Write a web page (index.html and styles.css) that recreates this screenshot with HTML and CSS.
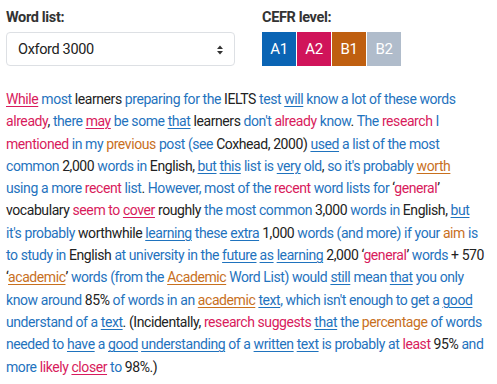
FILE: index.html
```html
<!DOCTYPE html>
<html lang="en">
<head>
    <meta charset="UTF-8">
    <meta name="viewport" content="width=device-width, initial-scale=1.0">
    <title>Word list checker</title>
    <link rel="stylesheet" href="styles.css">
</head>
<body>
    <div class="controls">
        <div class="control word-list">
            <label class="label">Word list:</label>
            <div class="select">
                <span>Oxford 3000</span>
                <svg class="arrows" width="8" height="12" viewBox="0 0 8 12">
                    <path d="M4 1.5 L7 5 H1 Z" fill="#333"/>
                    <path d="M4 10.5 L7 7 H1 Z" fill="#333"/>
                </svg>
            </div>
        </div>
        <div class="control">
            <label class="label">CEFR level:</label>
            <div class="levels">
                <span class="level a1">A1</span>
                <span class="level a2">A2</span>
                <span class="level b1">B1</span>
                <span class="level b2">B2</span>
            </div>
        </div>
    </div>

    <p class="text">
        <span class="r u">While</span> <span class="b">most</span> learners <span class="b">preparing for the</span> IELTS <span class="b">test</span> <span class="b u">will</span> <span class="b">know a lot of these words</span><br>
        <span class="r">already</span>, <span class="b">there</span> <span class="r u">may</span> <span class="b">be some</span> <span class="b u">that</span> learners <span class="b">don't</span> <span class="r">already</span> <span class="b">know</span>. <span class="b">The</span> <span class="r">research</span> <span class="b">I</span><br>
        <span class="r">mentioned</span> <span class="b">in my</span> <span class="o">previous</span> <span class="b">post</span> <span class="b">(see</span> Coxhead, 2000) <span class="b u">used</span> <span class="b">a list of the most</span><br>
        <span class="b">common</span> 2,000 <span class="b">words in</span> English, <span class="b u">but</span> <span class="b u">this</span> <span class="b">list is</span> <span class="b u">very</span> <span class="b">old</span>, <span class="b">so it's probably</span> <span class="o u">worth</span><br>
        <span class="b">using a more</span> <span class="r">recent</span> <span class="b">list</span>. <span class="b">However, most of the</span> <span class="r">recent</span> <span class="b">word lists for</span> ‘<span class="r">general</span>’<br>
        vocabulary <span class="r">seem to</span> <span class="r u">cover</span> roughly <span class="b">the most common</span> 3,000 <span class="b">words in</span> English, <span class="b u">but</span><br>
        <span class="b">it's probably</span> worthwhile <span class="b u">learning</span> <span class="b">these</span> <span class="b u">extra</span> 1,000 <span class="b">words (and more) if your</span> <span class="o">aim</span> <span class="b">is</span><br>
        <span class="b">to study in</span> English <span class="b">at university in the</span> <span class="b u">future</span> <span class="b u">as</span> <span class="b u">learning</span> 2,000 ‘<span class="r">general</span>’ <span class="b">words</span> + 570<br>
        ‘<span class="o u">academic</span>’ <span class="b">words (from the</span> <span class="o u">Academic</span> <span class="b">Word List) would</span> <span class="b u">still</span> <span class="b">mean</span> <span class="b u">that</span> <span class="b">you only</span><br>
        <span class="b">know around</span> 85% <span class="b">of words in an</span> <span class="o u">academic</span> <span class="b u">text</span><span class="b">, which isn't enough to get a</span> <span class="b u">good</span><br>
        <span class="b">understand of a</span> <span class="b u">text</span>. (Incidentally, <span class="r">research suggests</span> <span class="b u">that</span> <span class="b">the</span> <span class="o">percentage</span> <span class="b">of words</span><br>
        <span class="b">needed to</span> <span class="b u">have</span> <span class="b">a</span> <span class="b u">good</span> <span class="b u">understanding</span> <span class="b">of a</span> <span class="b u">written</span> <span class="b u">text</span> <span class="b">is probably at</span> <span class="r">least</span> 95% <span class="b">and</span><br>
        <span class="b">more</span> <span class="r">likely</span> <span class="r u">closer</span> <span class="b">to</span> 98%.)
    </p>
</body>
</html>
```

FILE: styles.css
```css
body {
    font-family: Roboto, "Liberation Sans", sans-serif;
    font-size: 14px;
    letter-spacing: -0.35px;
    color: #222;
    margin: 0;
    padding: 6px;
    background: #fff;
}
.controls {
    display: flex;
    gap: 27px;
}
.control {
    display: flex;
    flex-direction: column;
}
.word-list {
    width: 229px;
}
.label {
    font-weight: bold;
    font-size: 14.5px;
    color: #333;
    line-height: 20px;
    margin: 2px 0 4px;
}
.select {
    display: flex;
    align-items: center;
    justify-content: space-between;
    height: 34px;
    box-sizing: border-box;
    border: 1px solid #dde0e4;
    border-radius: 4px;
    padding: 0 10px 0 11px;
    font-size: 14.5px;
    color: #222;
}
.arrows {
    margin-top: 1px;
}
.levels {
    display: flex;
    gap: 1px;
}
.level {
    width: 34px;
    height: 34px;
    display: flex;
    align-items: center;
    justify-content: center;
    color: #fff;
    font-size: 15px;
}
.a1 { background: #0a64b4; }
.a2 { background: #d0145a; }
.b1 { background: #bf5f10; }
.b2 { background: #b0bccb; }
.text {
    line-height: 22.3px;
    letter-spacing: -0.42px;
    margin: 22px 0 0;
    white-space: nowrap;
}
.b { color: #1f73be; }
.r { color: #d81b5c; }
.o { color: #c8701e; }
.u {
    text-decoration: underline;
    text-decoration-thickness: 1px;
    text-underline-offset: 2px;
}
```
